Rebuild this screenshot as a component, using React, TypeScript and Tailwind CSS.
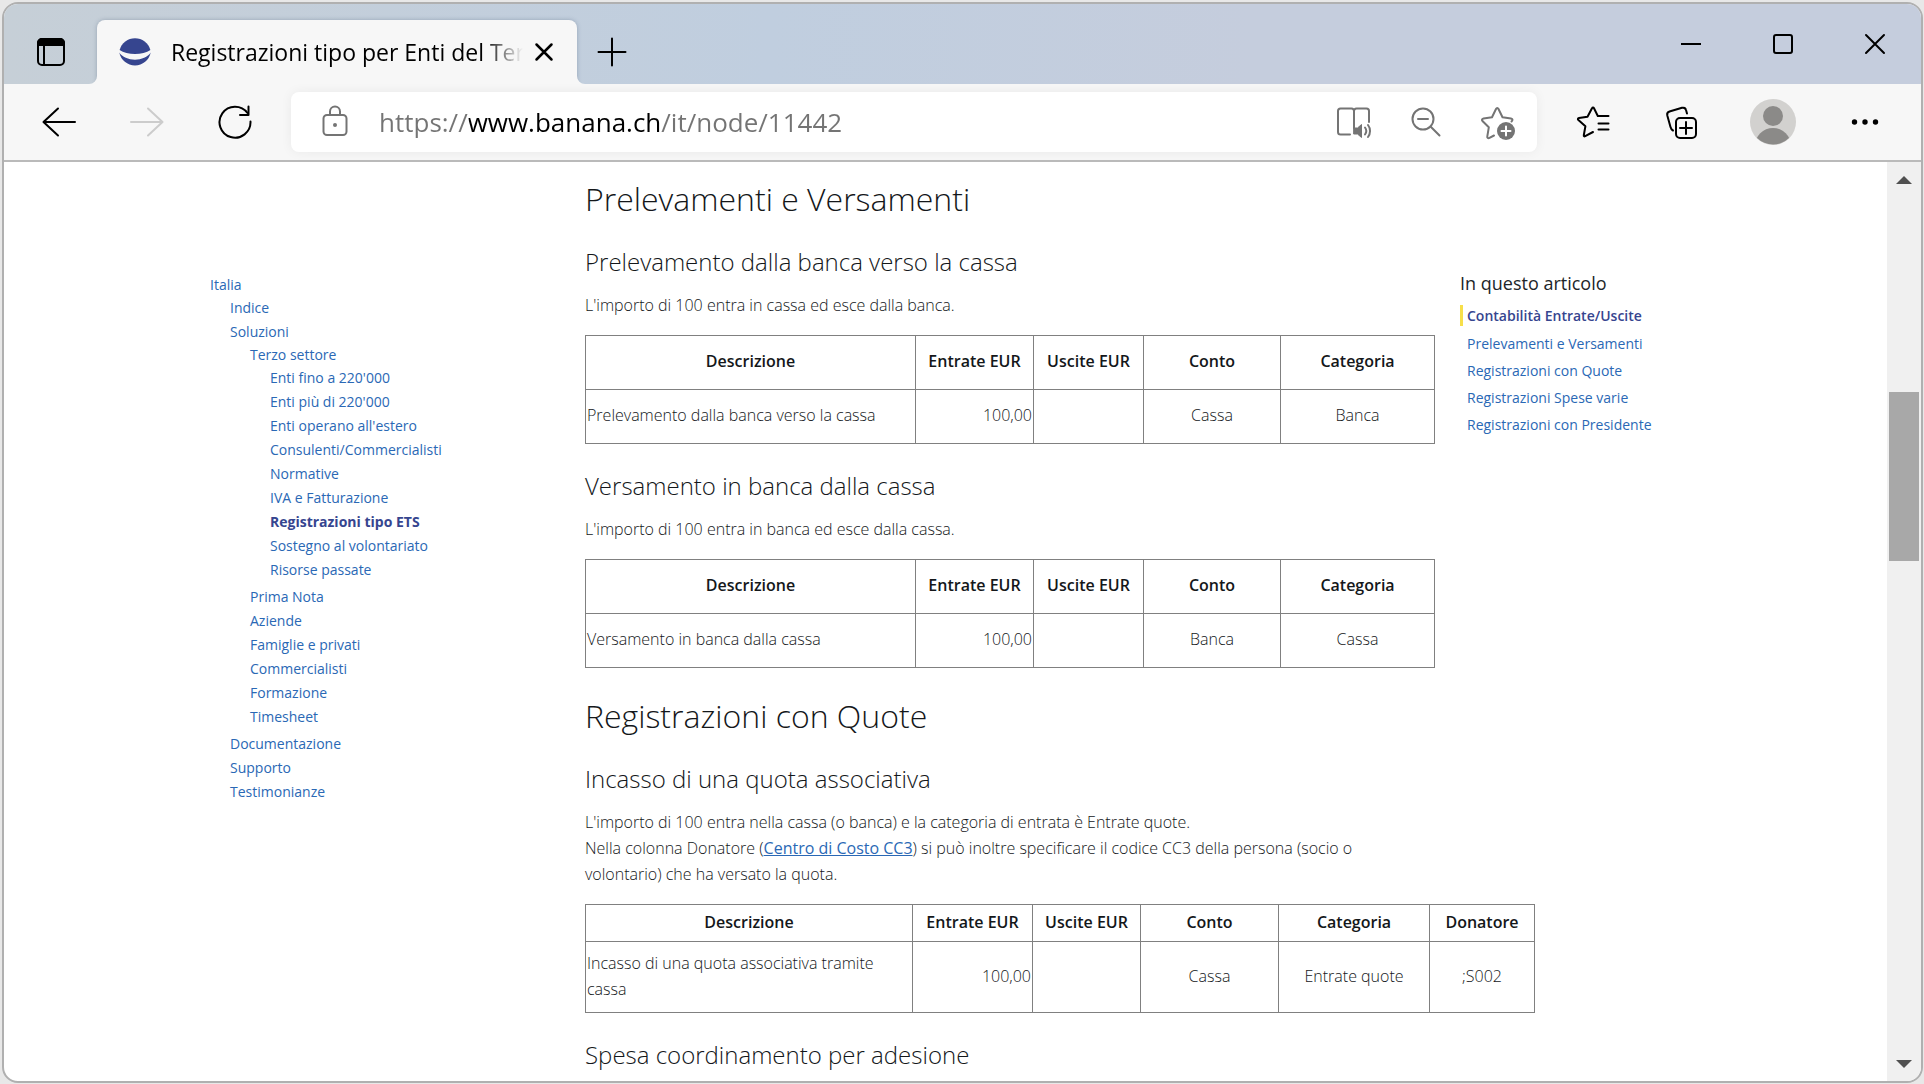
import React from 'react';

/* ---------- icons ---------- */

type IconProps = { size?: number; children: React.ReactNode };

function Icon({ size = 36, children }: IconProps) {
  return (
    <svg
      width={size}
      height={size}
      viewBox={`0 0 ${size} ${size}`}
      fill="none"
      stroke="currentColor"
      strokeWidth="2"
      strokeLinecap="round"
      strokeLinejoin="round"
      aria-hidden="true"
    >
      {children}
    </svg>
  );
}

const TabActionsIcon = () => (
  <Icon>
    <rect x="5" y="5" width="26" height="26" rx="4" />
    <path d="M5 11V9a4 4 0 0 1 4-4h18a4 4 0 0 1 4 4v2z" fill="currentColor" />
    <path d="M11 11v20" />
  </Icon>
);

const SiteLogo = () => (
  <svg width="32" height="32" viewBox="0 0 32 32" fill="#36458f" aria-hidden="true" className="shrink-0">
    <path d="M0.6 14A16 16 0 0 1 31.4 14C24 19.4 8 19.4 0.6 14Z" />
    <path d="M0.3 16.5C6 26 26 26 31.7 16.5A16 16 0 0 1 0.3 16.5Z" />
  </svg>
);

const BackIcon = () => (
  <Icon>
    <path d="M2.500 18H34M17 4.500 2.500 18 17 31.500" />
  </Icon>
);

const ForwardIcon = () => (
  <Icon>
    <path d="M2 18h31.500M19 4.500 33.500 18 19 31.500" />
  </Icon>
);

const ReloadIcon = () => (
  <Icon>
    <path d="M33.500 17.500A15.500 15.500 0 1 1 30.500 9" />
    <path d="M31.500 2.500V11H23" />
  </Icon>
);

const LockIcon = () => (
  <Icon>
    <rect x="6.500" y="11" width="23" height="20" rx="3.500" />
    <path d="M13 11V7.500a5 5 0 0 1 10 0V11" />
    <circle cx="18" cy="21" r="2" fill="currentColor" stroke="none" />
  </Icon>
);

const ReadAloudIcon = () => (
  <Icon>
    <path d="M18 7v17M18 7c0-1.500-1-2.500-2.500-2.500H4.500C3 4.500 2 5.500 2 7v21c0 1.500 1 2.500 2.500 2.500H14M18 7c0-1.500 1-2.500 2.500-2.500h10c1.500 0 2.500 1 2.500 2.500v11" />
    <path d="M18 24h3.500l4-3.500v13l-4-3.500H18z" fill="currentColor" strokeWidth="1" />
    <path d="M29 23.500c1.500 2 1.500 5 0 7M32 21c2.700 3.500 2.700 8.500 0 12" />
  </Icon>
);

const ZoomOutIcon = () => (
  <Icon>
    <circle cx="15" cy="15" r="10.500" />
    <path d="M10 15h10M22.500 22.500l9 9" />
  </Icon>
);

const AddFavoriteIcon = () => (
  <Icon>
    <path d="M31.500 17.500c1.500-1.500 1.200-2.800-.5-3.100l-8.500-1.200-4-8.200c-.7-1.400-1.800-1.400-2.500 0l-4 8.200-8.500 1.200c-1.700.3-2 1.700-.8 2.900l6.100 6-1.500 9c-.3 1.600.9 2.300 2.200 1.600l4.500-2.400" />
    <circle cx="26" cy="27" r="9" fill="currentColor" stroke="none" />
    <path d="M26 22.500v9M21.500 27h9" stroke="white" />
  </Icon>
);

const FavoritesIcon = () => (
  <Icon>
    <path d="M18 28l-7.800 4.200c-1 .5-1.600 0-1.400-1l1.600-9-7-6.200c-.9-.9-.6-1.900.6-2.100l8.500-1.200 4.500-8.400c.6-1.200 1.400-1.200 2 0l3.800 7.700h10.700" />
    <path d="M23.500 19.500h10M23.500 25.500h10" />
  </Icon>
);

const CollectionsIcon = () => (
  <Icon>
    <rect x="13" y="14" width="20" height="20" rx="4" />
    <path d="M23 18v12M17 24h12" />
    <path d="M24 9.500l-1-3.500c-.5-2-2-2.700-4-2.200L6.500 7.500c-2 .6-2.700 2-2.200 4L7.500 23c.4 1.600 1 2.700 2.500 3.500" />
  </Icon>
);

const AvatarIcon = () => (
  <svg width="46" height="46" viewBox="0 0 46 46" aria-hidden="true">
    <defs>
      <clipPath id="avatar-circle">
        <circle cx="23" cy="23" r="22.500" />
      </clipPath>
    </defs>
    <circle cx="23" cy="23" r="23" fill="#d2d1cf" />
    <circle cx="23" cy="17" r="10" fill="#8b8a88" />
    <circle cx="23" cy="47" r="18" fill="#8b8a88" clipPath="url(#avatar-circle)" />
  </svg>
);

const MoreIcon = () => (
  <Icon>
    <g fill="currentColor" stroke="none">
      <circle cx="7.500" cy="18" r="2.700" />
      <circle cx="18" cy="18" r="2.700" />
      <circle cx="28.500" cy="18" r="2.700" />
    </g>
  </Icon>
);

/* ---------- browser chrome ---------- */

function TitleBar() {
  return (
    <header className="flex h-20 shrink-0 bg-[linear-gradient(90deg,#c6cfd7,#c0cedf_40%,#c5cddd_65%)] text-black">
      <button type="button" aria-label="Menu azioni scheda" className="flex w-[93px] items-center justify-center pt-4">
        <TabActionsIcon />
      </button>
      <div className="relative mt-4 flex w-[480px] items-center rounded-t-lg bg-[#f7f7f7] pr-[19px] pl-[22px] shadow-[0_0_4px_rgba(60,80,110,0.35)] [clip-path:inset(-6px_-12px_0_-12px)]">
        <svg width="8" height="8" viewBox="0 0 8 8" className="absolute bottom-0 -left-2" aria-hidden="true">
          <path d="M8 0v8H0a8 8 0 0 0 8-8z" fill="#f7f7f7" />
        </svg>
        <svg width="8" height="8" viewBox="0 0 8 8" className="absolute -right-2 bottom-0" aria-hidden="true">
          <path d="M0 0v8h8a8 8 0 0 1-8-8z" fill="#f7f7f7" />
        </svg>
        <SiteLogo />
        <span className="ml-5 min-w-0 flex-1 whitespace-nowrap text-[23px] leading-8 [mask-image:linear-gradient(90deg,black_312px,transparent_352px)]">
          Registrazioni tipo per Enti del Ter
        </span>
        <button type="button" aria-label="Chiudi scheda" className="flex size-7 items-center justify-center">
          <Icon size={20}>
            <path d="M2.500 2.500l15 15M17.500 2.500l-15 15" strokeWidth="2.500" />
          </Icon>
        </button>
      </div>
      <button type="button" aria-label="Nuova scheda" className="flex w-[70px] items-center justify-center pt-[15px]">
        <Icon size={30}>
          <path d="M15 1.500v27M1.500 15h27" />
        </Icon>
      </button>
      <div className="ml-auto flex">
        <button type="button" aria-label="Riduci a icona" className="flex w-[92px] items-center justify-center">
          <Icon size={22}>
            <path d="M1 11h20" strokeLinecap="butt" />
          </Icon>
        </button>
        <button type="button" aria-label="Ingrandisci" className="flex w-[92px] items-center justify-center">
          <Icon size={22}>
            <rect x="2" y="2" width="18" height="18" rx="2" />
          </Icon>
        </button>
        <button type="button" aria-label="Chiudi" className="flex w-[92px] items-center justify-center">
          <Icon size={22}>
            <path d="M2 2l18 18M20 2 2 20" />
          </Icon>
        </button>
      </div>
    </header>
  );
}

function Toolbar() {
  return (
    <div className="flex h-[78px] shrink-0 items-center border-b-2 border-[#bababa] bg-[#f7f7f7] pr-[10px] pl-[11px] text-black">
      <button type="button" aria-label="Indietro" className="flex w-22 justify-center"><BackIcon /></button>
      <button type="button" aria-label="Avanti" disabled className="flex w-22 justify-center text-[#cccccc]"><ForwardIcon /></button>
      <button type="button" aria-label="Aggiorna" className="flex w-22 justify-center"><ReloadIcon /></button>
      <div className="mr-[14px] ml-3 flex h-[60px] min-w-0 flex-1 items-center rounded-lg bg-white pr-[3px] pl-[26px] text-[#747474] shadow-[0_0_12px_rgba(0,0,0,0.06)]">
        <LockIcon />
        <input
          type="text"
          aria-label="Indirizzo"
          defaultValue="https://www.banana.ch/it/node/11442"
          className="ml-[26px] h-10 min-w-0 flex-1 bg-[linear-gradient(90deg,#747474_90px,black_90px,black_282px,#747474_282px)] bg-clip-text text-[26px] text-transparent outline-none"
        />
        <button type="button" aria-label="Lettura ad alta voce" className="flex w-[72px] justify-center"><ReadAloudIcon /></button>
        <button type="button" aria-label="Zoom indietro" className="flex w-[72px] justify-center"><ZoomOutIcon /></button>
        <button type="button" aria-label="Aggiungi ai preferiti" className="flex w-[72px] justify-center"><AddFavoriteIcon /></button>
      </div>
      <button type="button" aria-label="Preferiti" className="flex w-21 justify-center"><FavoritesIcon /></button>
      <button type="button" aria-label="Raccolte" className="flex w-[92px] justify-center"><CollectionsIcon /></button>
      <button type="button" aria-label="Profilo" className="flex w-[92px] justify-center"><AvatarIcon /></button>
      <button type="button" aria-label="Impostazioni e altro" className="flex w-[92px] justify-center"><MoreIcon /></button>
    </div>
  );
}

function ScrollBar() {
  return (
    <div className="flex w-[34px] shrink-0 flex-col bg-[#f0f0f0] text-[#505050]">
      <button type="button" aria-label="Scorri in alto" className="flex h-9 items-center justify-center">
        <svg width="16" height="8" viewBox="0 0 16 8" aria-hidden="true"><path d="M0 8 8 0l8 8z" fill="currentColor" /></svg>
      </button>
      <div className="flex flex-1 flex-col px-0.5">
        <div className="grow-[194]" />
        <div className="grow-[169] bg-[#a8a8a8]" />
        <div className="grow-[485]" />
      </div>
      <button type="button" aria-label="Scorri in basso" className="flex h-[34px] items-center justify-center">
        <svg width="16" height="8" viewBox="0 0 16 8" aria-hidden="true"><path d="M0 0h16L8 8z" fill="currentColor" /></svg>
      </button>
    </div>
  );
}

/* ---------- page ---------- */

function NavItem({ children, current }: { children: React.ReactNode; current?: boolean }) {
  return (
    <a
      href="#"
      aria-current={current ? 'page' : undefined}
      className={current ? 'block font-bold text-[#36458f]' : 'block'}
    >
      {children}
    </a>
  );
}

function SideNav() {
  const sector = [
    "Enti fino a 220'000",
    "Enti più di 220'000",
    "Enti operano all'estero",
    'Consulenti/Commercialisti',
    'Normative',
    'IVA e Fatturazione',
    'Registrazioni tipo ETS',
    'Sostegno al volontariato',
    'Risorse passate',
  ];
  const solutions = ['Prima Nota', 'Aziende', 'Famiglie e privati', 'Commercialisti', 'Formazione', 'Timesheet'];
  return (
    <nav aria-label="Italia" className="pt-[111px] pl-px text-sm leading-6 text-[#2a68b5]">
      <NavItem>Italia</NavItem>
      <ul className="-mt-px pl-5">
        <li><NavItem>Indice</NavItem></li>
        <li>
          <NavItem>Soluzioni</NavItem>
          <ul className="-mt-px mb-[3px] pl-5">
            <li>
              <NavItem>Terzo settore</NavItem>
              <ul className="-mt-px mb-[3px] pl-5">
                {sector.map((label) => (
                  <li key={label}>
                    <NavItem current={label === 'Registrazioni tipo ETS'}>{label}</NavItem>
                  </li>
                ))}
              </ul>
            </li>
            {solutions.map((label) => (
              <li key={label}><NavItem>{label}</NavItem></li>
            ))}
          </ul>
        </li>
        <li><NavItem>Documentazione</NavItem></li>
        <li><NavItem>Supporto</NavItem></li>
        <li><NavItem>Testimonianze</NavItem></li>
      </ul>
    </nav>
  );
}

function ArticleToc() {
  const links = [
    'Prelevamenti e Versamenti',
    'Registrazioni con Quote',
    'Registrazioni Spese varie',
    'Registrazioni con Presidente',
  ];
  return (
    <nav aria-label="In questo articolo" className="pt-[107px] pl-[25px] text-sm text-[#2a68b5]">
      <h2 className="text-lg leading-7 text-[#212529]">In questo articolo</h2>
      <a href="#" className="mt-2 block border-l-[3px] border-[#f7df4a] pl-1 font-semibold leading-[21px] text-[#36458f]">
        Contabilità Entrate/Uscite
      </a>
      <ul className="mt-1 pl-[7px] leading-[27px]">
        {links.map((label) => (
          <li key={label}><a href="#">{label}</a></li>
        ))}
      </ul>
    </nav>
  );
}

type EntryTableProps = {
  headers: string[];
  row: string[];
  cols: string[];
  tableClass: string;
  headClass: string;
  rowClass: string;
};

function EntryTable({ headers, row, cols, tableClass, headClass, rowClass }: EntryTableProps) {
  return (
    <table className={`mt-[17px] table-fixed border-collapse ${tableClass}`}>
      <colgroup>
        {cols.map((c, i) => <col key={i} className={c} />)}
      </colgroup>
      <thead>
        <tr className={headClass}>
          {headers.map((h) => (
            <th key={h} scope="col" className="border border-[#808080] p-0 pb-[3px] font-semibold">{h}</th>
          ))}
        </tr>
      </thead>
      <tbody>
        <tr className={rowClass}>
          {row.map((cell, i) => (
            <td
              key={i}
              className={`border border-[#808080] px-px pt-0 pb-[3px] ${i === 0 ? 'text-left' : i === 1 ? 'text-right' : 'text-center'}`}
            >
              {cell}
            </td>
          ))}
        </tr>
      </tbody>
    </table>
  );
}

const HEADERS = ['Descrizione', 'Entrate EUR', 'Uscite EUR', 'Conto', 'Categoria'];
const COLS = ['w-[330px]', 'w-[118px]', 'w-[110px]', 'w-[137px]', 'w-[154px]'];
const WIDE_COLS = ['w-[327px]', 'w-[120px]', 'w-[108px]', 'w-[138px]', 'w-[151px]', 'w-[105px]'];

const H2 = 'text-[32px] leading-10 font-light';
const H3 = 'text-2xl leading-8 font-light';

function Article() {
  return (
    <article className="pt-[17px] text-base leading-[26px] font-light text-[#14171a]">
      <h2 className={H2}>Prelevamenti e Versamenti</h2>
      <h3 className={`mt-[27px] ${H3}`}>Prelevamento dalla banca verso la cassa</h3>
      <p className="mt-[14px]">L'importo di 100 entra in cassa ed esce dalla banca.</p>
      <EntryTable
        headers={HEADERS}
        row={['Prelevamento dalla banca verso la cassa', '100,00', '', 'Cassa', 'Banca']}
        cols={COLS}
        tableClass="w-[850px]"
        headClass="h-[54px]"
        rowClass="h-[54px]"
      />
      <h3 className={`mt-[26px] ${H3}`}>Versamento in banca dalla cassa</h3>
      <p className="mt-[14px]">L'importo di 100 entra in banca ed esce dalla cassa.</p>
      <EntryTable
        headers={HEADERS}
        row={['Versamento in banca dalla cassa', '100,00', '', 'Banca', 'Cassa']}
        cols={COLS}
        tableClass="w-[850px]"
        headClass="h-[54px]"
        rowClass="h-[54px]"
      />
      <h2 className={`mt-7 ${H2}`}>Registrazioni con Quote</h2>
      <h3 className={`mt-[27px] ${H3}`}>Incasso di una quota associativa</h3>
      <div className="mt-[14px] max-w-[820px]">
        <p>L'importo di 100 entra nella cassa (o banca) e la categoria di entrata è Entrate quote.</p>
        <p>
          Nella colonna Donatore (
          <a href="#" className="font-normal text-[#2a68b5] underline">Centro di Costo CC3</a>
          ) si può inoltre specificare il codice CC3 della persona (socio o volontario) che ha versato la quota.
        </p>
      </div>
      <EntryTable
        headers={[...HEADERS, 'Donatore']}
        row={['Incasso di una quota associativa tramite cassa', '100,00', '', 'Cassa', 'Entrate quote', ';S002']}
        cols={WIDE_COLS}
        tableClass="w-[950px]"
        headClass="h-[37px]"
        rowClass="h-[71px]"
      />
      <h3 className={`mt-[26px] ${H3}`}>Spesa coordinamento per adesione</h3>
    </article>
  );
}

export default function App() {
  return (
    <div className="h-screen bg-[#e8e8e8] pt-0.5 pr-px pb-px pl-0.5 font-['Open_Sans','Noto_Sans',sans-serif]">
      <div className="flex h-full flex-col overflow-hidden rounded-2xl border-2 border-[#b0b0b0] bg-white">
        <TitleBar />
        <Toolbar />
        <div className="flex min-h-0 flex-1">
          <main className="grid min-w-0 flex-1 grid-cols-[376px_850px_minmax(0,1fr)] overflow-hidden pl-[205px]">
            <SideNav />
            <Article />
            <ArticleToc />
          </main>
          <ScrollBar />
        </div>
      </div>
    </div>
  );
}
